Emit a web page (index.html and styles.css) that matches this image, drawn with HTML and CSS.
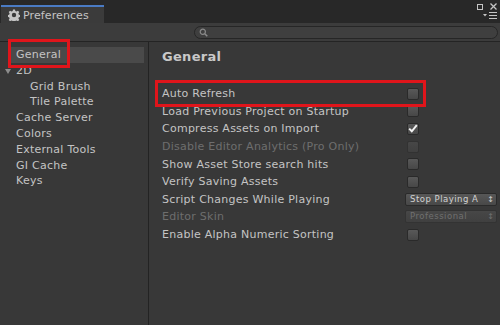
FILE: index.html
```html
<!DOCTYPE html>
<html>
<head>
<meta charset="utf-8">
<link rel="stylesheet" href="styles.css">
</head>
<body>
<div class="window">
  <div class="tabstrip">
    <div class="tab">
      <svg class="gear" width="12" height="12" viewBox="0 0 12 12">
        <path d="M5 0.5h2l0.3 1.6 1.2 0.5 1.4-0.9 1.4 1.4-0.9 1.4 0.5 1.2 1.6 0.3v2l-1.6 0.3-0.5 1.2 0.9 1.4-1.4 1.4-1.4-0.9-1.2 0.5-0.3 1.6h-2l-0.3-1.6-1.2-0.5-1.4 0.9-1.4-1.4 0.9-1.4-0.5-1.2-1.6-0.3v-2l1.6-0.3 0.5-1.2-0.9-1.4 1.4-1.4 1.4 0.9 1.2-0.5z" fill="#c4c4c4"/>
        <circle cx="6" cy="6" r="2.2" fill="#3a3a3a"/>
      </svg>
      <span>Preferences</span>
    </div>
    <div class="wincontrols">
      <div class="wc-top">
        <span class="maxbox"></span>
        <svg width="7" height="7" viewBox="0 0 7 7"><path d="M0.5 0.5L6.5 6.5M6.5 0.5L0.5 6.5" stroke="#c4c4c4" stroke-width="1.3"/></svg>
      </div>
      <svg class="menuicon" width="14" height="7" viewBox="0 0 14 7"><path d="M0 2h4L2 4.5z" fill="#c4c4c4"/><path d="M6 0.5h8M6 3.5h8M6 6.5h8" stroke="#c4c4c4" stroke-width="1"/></svg>
    </div>
  </div>
  <div class="toolbar">
    <div class="search">
      <svg width="9" height="9" viewBox="0 0 9 9"><circle cx="3.8" cy="3.8" r="2.6" fill="none" stroke="#8a8a8a" stroke-width="1.2"/><path d="M5.8 5.8L8.3 8.3" stroke="#8a8a8a" stroke-width="1.5"/></svg>
    </div>
  </div>
  <div class="main">
    <div class="sidebar">
      <div class="item selected">General</div>
      <div class="item"><span class="fold"></span>2D</div>
      <div class="item sub">Grid Brush</div>
      <div class="item sub">Tile Palette</div>
      <div class="item">Cache Server</div>
      <div class="item">Colors</div>
      <div class="item">External Tools</div>
      <div class="item">GI Cache</div>
      <div class="item">Keys</div>
    </div>
    <div class="content">
      <div class="heading">General</div>
      <div class="row"><span class="label">Auto Refresh</span><span class="check"></span></div>
      <div class="row"><span class="label">Load Previous Project on Startup</span><span class="check"></span></div>
      <div class="row"><span class="label">Compress Assets on Import</span><span class="check on"><svg width="10" height="9" viewBox="0 0 10 9"><path d="M1.2 4.6L3.8 7.3L8.8 1.2" fill="none" stroke="#f2f2f2" stroke-width="2"/></svg></span></div>
      <div class="row disabled"><span class="label">Disable Editor Analytics (Pro Only)</span><span class="check"></span></div>
      <div class="row"><span class="label">Show Asset Store search hits</span><span class="check"></span></div>
      <div class="row"><span class="label">Verify Saving Assets</span><span class="check"></span></div>
      <div class="row"><span class="label">Script Changes While Playing</span><span class="dropdown">Stop Playing A<span class="arrows">&#x2195;</span></span></div>
      <div class="row disabled"><span class="label">Editor Skin</span><span class="dropdown">Professional<span class="arrows">&#x2195;</span></span></div>
      <div class="row"><span class="label">Enable Alpha Numeric Sorting</span><span class="check"></span></div>
    </div>
  </div>
  <div class="mark mark-general"></div>
  <div class="mark mark-refresh"></div>
</div>
</body>
</html>
```

FILE: styles.css
```css
html, body {
  margin: 0;
  padding: 0;
  background: #383838;
}
.window {
  position: relative;
  width: 500px;
  height: 325px;
  overflow: hidden;
  background: #383838;
  font-family: "DejaVu Sans", sans-serif;
  font-size: 11px;
  letter-spacing: 0.25px;
  color: #c4c4c4;
  display: flex;
  flex-direction: column;
}
.tabstrip {
  height: 23px;
  background: #282828;
  display: flex;
  align-items: flex-end;
  flex-shrink: 0;
}
.tab {
  width: 96px;
  height: 16px;
  margin-left: 1px;
  border-top: 2px solid #4a7bc4;
  background: #3b3b3b;
  display: flex;
  align-items: center;
  gap: 3px;
  padding-left: 7px;
  box-sizing: content-box;
  font-size: 11px;
  letter-spacing: 0.1px;
  color: #c4c4c4;
}
.gear { flex-shrink: 0; }
.wincontrols {
  margin-left: auto;
  align-self: flex-start;
  width: 24px;
  padding: 3px 3px 0 0;
  display: flex;
  flex-direction: column;
  align-items: flex-end;
  gap: 2px;
}
.wc-top {
  display: flex;
  align-items: center;
  gap: 7px;
}
.maxbox {
  width: 4px;
  height: 4px;
  border: 1px solid #c4c4c4;
}
.toolbar {
  height: 18px;
  background: #3c3c3c;
  border-bottom: 1px solid #242424;
  display: flex;
  align-items: center;
  flex-shrink: 0;
}
.search {
  margin-left: 194px;
  width: 298px;
  height: 11px;
  border: 1px solid #262626;
  border-radius: 7px;
  background: #3f3f3f;
  display: flex;
  align-items: center;
  padding-left: 4px;
}
.main {
  flex: 1;
  display: flex;
}
.sidebar {
  width: 149px;
  border-right: 1px solid #232323;
  padding-top: 5px;
  box-sizing: border-box;
}
.item {
  height: 15.8px;
  line-height: 15.8px;
  padding-left: 16px;
  position: relative;
  white-space: nowrap;
}
.item.sub { padding-left: 30px; }
.item.selected {
  background: #4a4a4a;
  margin: 0 4px 0 8px;
  padding-left: 8px;
}
.fold {
  position: absolute;
  left: 5px;
  top: 6px;
  border-left: 3px solid transparent;
  border-right: 3px solid transparent;
  border-top: 5px solid #8c8c8c;
}
.content {
  flex: 1;
  padding: 5px 0 0 13px;
}
.heading {
  font-size: 13px;
  font-weight: bold;
  letter-spacing: 0.3px;
  color: #c8c8c8;
  height: 20px;
  line-height: 20px;
  margin-bottom: 18px;
}
.row {
  height: 17.6px;
  display: flex;
  align-items: center;
  white-space: nowrap;
}
.row .label { flex: 1; }
.row.disabled { color: #6e6e6e; }
.check {
  width: 10px;
  height: 10px;
  margin-right: 81px;
  border: 1px solid #2a2a2a;
  border-radius: 2px;
  background: linear-gradient(#595959, #474747);
  display: flex;
  align-items: center;
  justify-content: center;
}
.row.disabled .check {
  background: linear-gradient(#474747, #404040);
  border-color: #323232;
}
.check.on svg { display: block; }
.dropdown {
  width: 84px;
  height: 11px;
  margin-right: 3px;
  padding: 0 2px 0 4px;
  border: 1px solid #2a2a2a;
  border-radius: 2px;
  background: linear-gradient(#575757, #484848);
  font-size: 8.5px;
  letter-spacing: 0.5px;
  line-height: 11px;
  color: #d2d2d2;
  display: flex;
  justify-content: space-between;
}
.row.disabled .dropdown {
  background: linear-gradient(#474747, #404040);
  color: #707070;
  border-color: #333;
}
.arrows { font-size: 8px; letter-spacing: 0; }
.mark {
  position: absolute;
  border: 3px solid #e0151b;
}
.mark-general {
  left: 8px;
  top: 39px;
  width: 56px;
  height: 23px;
}
.mark-refresh {
  left: 155px;
  top: 80px;
  width: 265px;
  height: 21px;
}
```
